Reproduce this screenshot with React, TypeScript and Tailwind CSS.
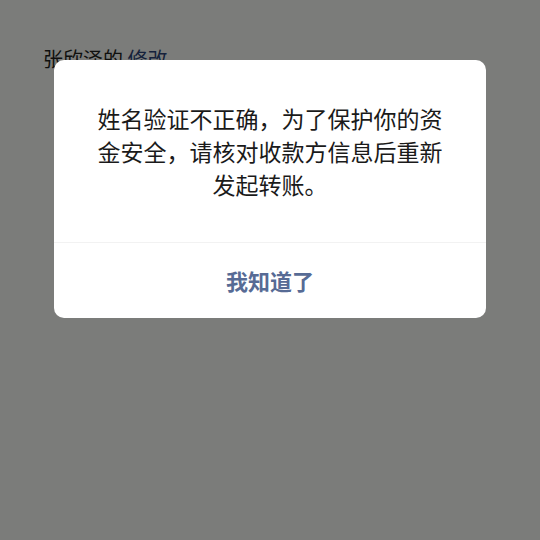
const FONT = { fontFamily: '"Noto Sans CJK SC", "Noto Sans", sans-serif' };

export default function App() {
  return (
    <div className="relative w-[540px] h-[540px] overflow-hidden bg-white" style={FONT}>
      {/* page underneath */}
      <div className="px-[43px] pt-[44px] text-[20px] leading-[30px] text-[#1a1a1a]">
        张欣泽的 <span className="text-[#2a3f7a]">修改</span>
      </div>

      {/* mask */}
      <div className="absolute inset-0 bg-[#060804]/[0.53] flex items-start justify-center">
        <div className="mt-[60px] w-[432px] bg-white rounded-[10px] overflow-hidden">
          <div className="px-[42px] pt-[42px] pb-[41px] text-center text-[23px] leading-[33px] text-[#1a1a1a]">
            姓名验证不正确，为了保护你的资金安全，请核对收款方信息后重新发起转账。
          </div>
          <div className="h-px bg-[#f2f2f2]" />
          <div className="h-[75px] flex items-center justify-center text-[22px] font-bold text-[#576b95]">
            我知道了
          </div>
        </div>
      </div>
    </div>
  );
}
